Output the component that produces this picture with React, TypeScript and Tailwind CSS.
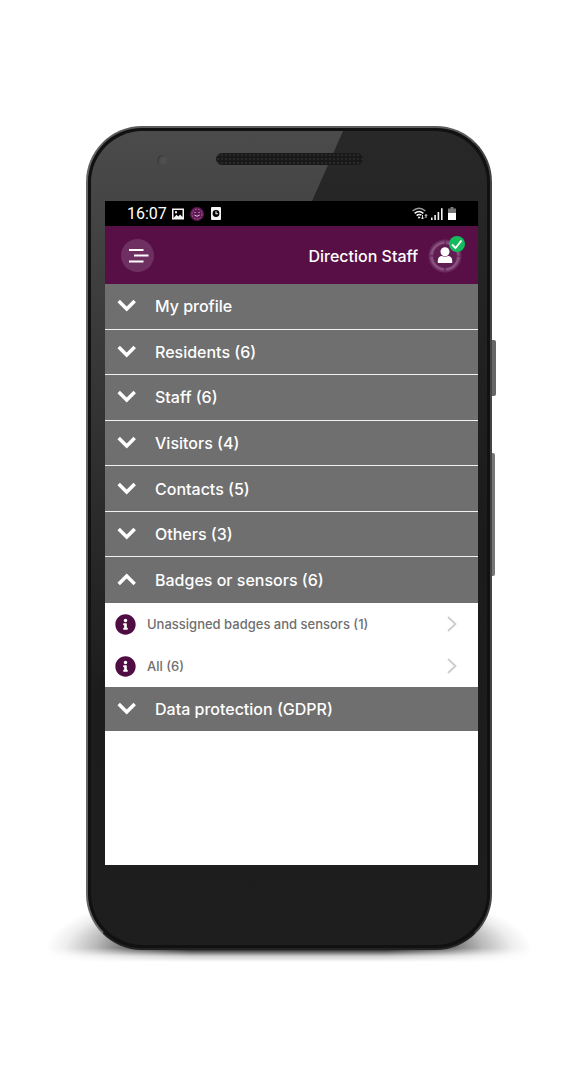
import { useState } from 'react'
import { FaInfoCircle } from 'react-icons/fa'

type Section = { id: string; label: string }

const sections: Section[] = [
  { id: 'profile', label: 'My profile' },
  { id: 'residents', label: 'Residents (6)' },
  { id: 'staff', label: 'Staff (6)' },
  { id: 'visitors', label: 'Visitors (4)' },
  { id: 'contacts', label: 'Contacts (5)' },
  { id: 'others', label: 'Others (3)' },
  { id: 'badges', label: 'Badges or sensors (6)' },
]

const badgeLinks = ['Unassigned badges and sensors (1)', 'All (6)']

function Chevron({ open }: { open: boolean }) {
  return (
    <svg viewBox="0 0 20 20" className="size-5 shrink-0" fill="none" stroke="currentColor" strokeWidth="3.5" aria-hidden="true">
      <path d={open ? 'M1.7 14 L9.7 6 L17.7 14' : 'M1.7 5 L9.7 13 L17.7 5'} />
    </svg>
  )
}

function SectionHeader({ label, open, onClick }: { label: string; open: boolean; onClick?: () => void }) {
  return (
    <button
      type="button"
      aria-expanded={open}
      onClick={onClick}
      className="flex h-full w-full cursor-pointer items-center gap-[18px] bg-[#6f6f6f] pl-3 text-left text-base font-medium text-white"
    >
      <Chevron open={open} />
      {label}
    </button>
  )
}

function StatusBar() {
  return (
    <div className="flex h-[25px] items-center bg-black px-[22px] text-white">
      <span className="font-[Roboto,sans-serif] text-base">16:07</span>
      <svg viewBox="0 0 12 12" className="ml-[5px] h-3 w-3" aria-hidden="true">
        <path fill="#f4f4f4" fillRule="evenodd" d="M0 .5h12v11H0zM1.5 2v8l3-3.2 1.8 1.7L8 6.5 10.5 9V2zM3 3.2h2v2H3z" />
      </svg>
      <svg viewBox="0 0 14 14" className="ml-1.5 size-3.5" fill="none" aria-hidden="true">
        <circle cx="7" cy="7" r="7" fill="#5f1752" />
        <circle cx="7" cy="7" r="5" stroke="#a0609a" strokeWidth="1" strokeDasharray="2 1" />
        <path d="M4.5 5.5h1M8.5 5.5h1" stroke="#e8c8e4" />
        <path d="M4.3 8Q7 10.6 9.7 8" stroke="#e8c8e4" />
      </svg>
      <svg viewBox="0 0 10 13" className="ml-[7px] h-[13px] w-2.5" fill="none" aria-hidden="true">
        <rect width="10" height="13" rx="1" fill="#f4f4f4" />
        <circle cx="5" cy="6.5" r="3.4" fill="#000" />
        <path d="M5 4.3v2.5h2" stroke="#f4f4f4" strokeWidth="1.1" />
      </svg>
      <svg viewBox="0 0 16 13" className="ml-auto h-[13px] w-4" fill="none" stroke="#f4f4f4" aria-hidden="true">
        <path d="M.6 4Q7 -1.6 13.4 4" stroke="#9a9a9a" strokeWidth="1.4" />
        <path d="M2.6 6.4Q7 2.6 11.4 6.4" strokeWidth="1.5" />
        <path d="M4.6 8.6Q7 6.8 9.4 8.2" strokeWidth="1.5" />
        <circle cx="7" cy="10.4" r="1" fill="#f4f4f4" stroke="none" />
        <path d="M10.5 8v4M9 10.5l1.5 1.5L12 10.5M14 11V7.5M12.9 8.8L14 7.6l1.1 1.2" strokeWidth=".9" />
      </svg>
      <svg viewBox="0 0 12 12" className="ml-[3px] size-3" fill="#f4f4f4" aria-hidden="true">
        <path d="M0 9.5h1.6V12H0zM3.3 7h1.6v5H3.3zM6.6 4h1.6v8H6.6zM10 .3h1.6V12H10z" />
      </svg>
      <svg viewBox="0 0 8 13" className="ml-[5px] h-[13px] w-2" aria-hidden="true">
        <path fill="#777" d="M2.5 0h3v1.5H8V6H0V1.5h2.5z" />
        <path fill="#fff" d="M0 6h8v7H0z" />
      </svg>
    </div>
  )
}

function AppBar() {
  return (
    <header className="flex h-[58px] items-center bg-[#570f45] pr-3 pl-4 text-white">
      <button type="button" aria-label="Menu" className="size-[33px] cursor-pointer rounded-full bg-[#6e3061]">
        <svg viewBox="0 0 33 33" fill="none" stroke="currentColor" strokeWidth="2" aria-hidden="true">
          <path d="M8 11h14.5M13 16.5h14.500M8 22.5h14.5" />
        </svg>
      </button>
      <span className="ml-auto pt-0.5 text-base font-medium">Direction Staff</span>
      <button type="button" aria-label="Account" className="ml-2 cursor-pointer">
        <svg viewBox="0 0 40 40" className="size-10" fill="none" aria-hidden="true">
          <circle cx="19" cy="21" r="16.5" fill="#6b2b5e" />
          <circle cx="19" cy="21" r="13.5" stroke="#89507f" strokeWidth="2.5" strokeDasharray="19.2 2" strokeDashoffset="-1" />
          <circle cx="19" cy="21" r="11.5" fill="#5f1d50" />
          <circle cx="19" cy="16.7" r="4.5" fill="#fff" />
          <path d="M11.8 28v-2.5c0-3 2-4.5 4-4.5q3.2 1.4 6.4 0c2 0 4 1.5 4 4.5v2.5z" fill="#fff" />
          <circle cx="31" cy="9" r="8" fill="#13bb5c" />
          <path d="M26 9.5l3.5 3.5 6-7.5" stroke="#fff" strokeWidth="1.9" />
        </svg>
      </button>
    </header>
  )
}

export default function App() {
  const [badgesOpen, setBadgesOpen] = useState(true)

  return (
    <main className="min-h-screen bg-white pt-[126px] pr-[88px] pb-[125px] pl-[86px] font-[Inter,'Liberation_Sans',sans-serif]">
      <div className="relative isolate mx-auto max-w-md">
        {/* ground shadow, seen under the lower edge of the case */}
        <div className="absolute -inset-x-10 -bottom-3 -z-20 h-20 bg-[radial-gradient(50%_85%_at_50%_85%,#000_40%,#0009_65%,#0004_80%,#0001_92%,transparent)] mask-[linear-gradient(to_top,transparent,#0003_6px,#000_14px)]" />

        {/* side keys */}
        <div className="absolute top-[214px] -right-1 -z-10 h-[56px] w-2 rounded-xs bg-[#666]" />
        <div className="absolute top-[327px] -right-[3px] -z-10 h-[123px] w-2 rounded-xs bg-[#777]" />

        <div className="relative overflow-hidden rounded-[56px] border-2 border-[#4a4a4a] border-t-[#5c5c5c] border-r-[#444] border-b-[#222] border-l-[#666] bg-[#111] p-[3px]">
          <div className="relative isolate overflow-hidden rounded-[52px] bg-linear-to-b from-[#282828] via-[#1b1b1b] to-[#1e1e1e] pr-[9px] pl-[14px]">
            {/* diagonal glare */}
            <div className="absolute inset-x-0 top-0 -z-10 h-[570px] bg-linear-to-b from-[#4b4b4b] via-[#333] to-[#1c1c1c] [clip-path:polygon(0_0,252px_0,0_100%)]" />

            <div className="relative flex h-[70px] justify-center">
              <span className="absolute top-6 left-[52px] size-2.5 rounded-full bg-[#505050] shadow-[inset_2px_1px_2px_#3c3c3c]" />
              <span className="mt-[22px] -ml-1 h-3 w-[147px] rounded-full bg-[#191919] bg-[radial-gradient(#292929_1px,transparent_1px)] bg-size-[4px_4px]" />
            </div>

            <div className="bg-white pb-[134px]">
              <StatusBar />
              <AppBar />
              <nav aria-label="Directory">
                <ul className="grid h-[319px] grid-rows-7 divide-y divide-[#f2f2f2]">
                  {sections.map((s) => (
                    <li key={s.id}>
                      <SectionHeader
                        label={s.label}
                        open={s.id === 'badges' && badgesOpen}
                        onClick={s.id === 'badges' ? () => setBadgesOpen(!badgesOpen) : undefined}
                      />
                    </li>
                  ))}
                </ul>
                {badgesOpen && (
                  <ul className="text-[13px] font-medium text-[#6f6f6f]">
                    {badgeLinks.map((label) => (
                      <li key={label}>
                        <a href="#" className="flex h-[42px] items-center pr-[21px] pl-2.5">
                          <FaInfoCircle className="mr-[11px] size-[21px] text-[#4f0d43]" />
                          <span className="pt-0.5">{label}</span>
                          <svg viewBox="0 0 10 16" className="ml-auto h-4 w-2.5" fill="none" stroke="#ccc" strokeWidth="1.8" aria-hidden="true">
                            <path d="M1 1L8.5 8 1 15" />
                          </svg>
                        </a>
                      </li>
                    ))}
                  </ul>
                )}
                <div className="h-11">
                  <SectionHeader label="Data protection (GDPR)" open={false} />
                </div>
              </nav>
            </div>

            <div className="h-20" />
          </div>
        </div>
      </div>
    </main>
  )
}
